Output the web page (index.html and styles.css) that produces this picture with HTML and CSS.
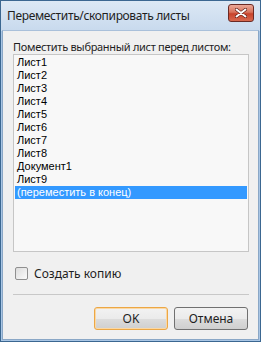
FILE: index.html
```
<!DOCTYPE html>
<html lang="ru">
<head>
  <meta charset="UTF-8">
  <title>Переместить/скопировать листы</title>
  <link rel="stylesheet" href="styles.css">
</head>
<body>
  <div class="window">
    <div class="titlebar">
      <span class="title">Переместить/скопировать листы</span>
      <button class="close" type="button">
        <svg width="12" height="10" viewBox="0 0 12 10">
          <path d="M1.5 1.5 L10.5 8.5 M10.5 1.5 L1.5 8.5" stroke="#5a1a14" stroke-width="3.2" stroke-linecap="round"/>
          <path d="M1.5 1.5 L10.5 8.5 M10.5 1.5 L1.5 8.5" stroke="#fff" stroke-width="2" stroke-linecap="round"/>
        </svg>
      </button>
    </div>
    <div class="content">
      <div class="prompt">Поместить выбранный лист перед листом:</div>
      <ul class="sheets">
        <li>Лист1</li>
        <li>Лист2</li>
        <li>Лист3</li>
        <li>Лист4</li>
        <li>Лист5</li>
        <li>Лист6</li>
        <li>Лист7</li>
        <li>Лист8</li>
        <li>Документ1</li>
        <li>Лист9</li>
        <li class="selected">(переместить в конец)</li>
      </ul>
      <label class="copy"><span class="checkbox"></span>Создать копию</label>
      <div class="separator"></div>
      <div class="actions">
        <button class="btn btn-default" type="button">OK</button>
        <button class="btn" type="button">Отмена</button>
      </div>
    </div>
  </div>
</body>
</html>
```

FILE: styles.css
```
body {
  margin: 0;
  padding: 0;
  background-color: #000;
  font-family: "Noto Sans", "Open Sans", sans-serif;
  font-size: 12px;
}

.window {
  width: 259px;
  height: 340px;
  border: 1px solid #3b6791;
  background: linear-gradient(#dce8f5, #c8d9ed 30px, #a9c6e5 30px, #a9c6e5);
  display: flex;
  flex-direction: column;
}

.titlebar {
  height: 29px;
  display: flex;
  align-items: flex-start;
  justify-content: space-between;
  padding: 0 6px 0 6px;
}

.title {
  margin-top: 6px;
  color: #1e1e1e;
  letter-spacing: -0.35px;
  white-space: nowrap;
}

.close {
  margin-top: 3px;
  width: 26px;
  height: 18px;
  padding: 0;
  border: 1px solid #6b2a24;
  border-radius: 3px;
  background: linear-gradient(#eba898, #d8735c 45%, #c8432b 55%, #d8694f);
  display: flex;
  align-items: center;
  justify-content: center;
}

.content {
  flex: 1;
  margin: 0 1px 1px 1px;
  border: 1px solid #8aa7c6;
  border-top-color: #a9c0da;
  background-color: #f0f0f0;
  padding: 8px 9px 0 10px;
  color: #1e1e1e;
}

.prompt {
  height: 15px;
  line-height: 15px;
  font-size: 11px;
  letter-spacing: -0.3px;
  white-space: nowrap;
}

.sheets {
  list-style: none;
  margin: 0;
  padding: 1px;
  height: 194px;
  border: 1px solid #c6c6c6;
  background-color: #f8f8f8;
  font-family: "Liberation Sans", Arial, sans-serif;
  font-size: 11px;
  color: #000;
}

.sheets li {
  height: 13px;
  line-height: 13px;
  padding-left: 2px;
}

.sheets li.selected {
  background-color: #3399ff;
  color: #fff;
}

.copy {
  display: flex;
  align-items: center;
  gap: 6px;
  margin-top: 15px;
  margin-left: 2px;
  height: 13px;
}

.checkbox {
  width: 11px;
  height: 11px;
  border: 1px solid #8f8f8f;
  border-radius: 2px;
  background: linear-gradient(135deg, #dcdcdc, #fbfbfb);
}

.separator {
  margin-top: 14px;
  height: 1px;
  background-color: #c8c8c8;
}

.actions {
  display: flex;
  justify-content: flex-end;
  gap: 6px;
  margin-top: 12px;
  padding-right: 1px;
}

.btn {
  width: 74px;
  height: 23px;
  padding: 0;
  border: 1px solid #707070;
  border-radius: 3px;
  background: linear-gradient(#f2f2f2, #ebebeb 50%, #dddddd 50%, #cfcfcf);
  font-family: "Noto Sans", "Open Sans", sans-serif;
  font-size: 12px;
  color: #1e1e1e;
}

.btn-default {
  border-color: #eca745;
  box-shadow: inset 0 0 0 1px #fbd8a4;
}
```
